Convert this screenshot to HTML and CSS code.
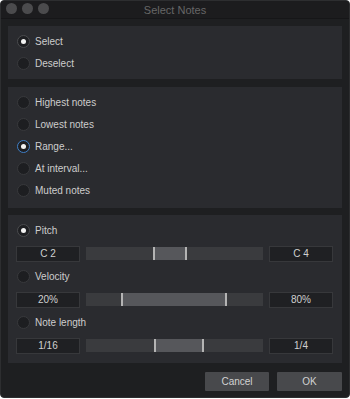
FILE: index.html
```html
<!DOCTYPE html>
<html lang="en">
<head>
<meta charset="utf-8">
<title>Select Notes</title>
<link rel="stylesheet" href="styles.css">
</head>
<body>
<div class="window">
	<div class="titlebar">
		<div class="lights"><span></span><span></span><span></span></div>
		<div class="title">Select Notes</div>
	</div>
	<div class="content">
		<div class="panel p1">
			<label class="radio on"><i></i>Select</label>
			<label class="radio"><i></i>Deselect</label>
		</div>
		<div class="panel p2">
			<label class="radio"><i></i>Highest notes</label>
			<label class="radio"><i></i>Lowest notes</label>
			<label class="radio on focus"><i></i>Range...</label>
			<label class="radio"><i></i>At interval...</label>
			<label class="radio"><i></i>Muted notes</label>
		</div>
		<div class="panel p3">
			<div class="group">
				<label class="radio on"><i></i>Pitch</label>
				<div class="field-row">
					<div class="box">C 2</div>
					<div class="track"><div class="fill" style="left:37.7%; width:19.2%"></div></div>
					<div class="box">C 4</div>
				</div>
			</div>
			<div class="group">
				<label class="radio"><i></i>Velocity</label>
				<div class="field-row">
					<div class="box">20%</div>
					<div class="track"><div class="fill" style="left:19.6%; width:60.2%"></div></div>
					<div class="box">80%</div>
				</div>
			</div>
			<div class="group">
				<label class="radio"><i></i>Note length</label>
				<div class="field-row">
					<div class="box">1/16</div>
					<div class="track"><div class="fill" style="left:38.6%; width:27.8%"></div></div>
					<div class="box">1/4</div>
				</div>
			</div>
		</div>
		<div class="buttons">
			<button class="btn">Cancel</button>
			<button class="btn ok">OK</button>
		</div>
	</div>
</div>
</body>
</html>
```

FILE: styles.css
```css
* {margin:0; padding:0; box-sizing:border-box;}
body {background:#fff; font-family:"Liberation Sans", Arial, sans-serif; font-size:10px; color:#cdcdcd;}

.window {width:350px; height:398px; background:#1e1f21; border:1px solid #2d2e30; border-radius:4px; overflow:hidden; display:flex; flex-direction:column;}

/* title bar */
.titlebar {height:18px; flex:none; position:relative; background:#1c1c1e; border-bottom:1px solid #161618; display:flex; align-items:center; justify-content:center;}
.lights {position:absolute; left:5px; top:2px; display:flex; gap:5px;}
.lights span {width:11px; height:11px; border-radius:50%; background:#4b4b4d;}
.title {font-size:11px; color:#676767;}

.content {padding:7px 7px 0 7px; display:flex; flex-direction:column;}

.panel {background:#2a2b2f; display:flex; flex-direction:column;}
.p1 {padding:4px 0 5px 9px;}
.p2 {margin-top:8px; padding:4px 0 6px 9px;}
.p2 .radio {height:22.2px;}
.p3 {margin-top:7px; padding:5px 9px 9px 8px;}
.p3 .radio {padding-left:1px;}

/* radio buttons */
.radio {height:22px; display:flex; align-items:center; gap:5px;}
.radio i {flex:none; width:13px; height:13px; border-radius:50%; background:#1d1e21; border:1px solid #38393c; display:flex; align-items:center; justify-content:center;}
.radio.on i {border-color:#4a4b4e; background:#1e1f22;}
.radio.on i:after {content:""; width:5px; height:5px; border-radius:50%; background:#f2f2f2;}
.radio.focus i {border:1.5px solid #3f7fc7;}

/* range rows */
.group + .group {margin-top:4px;}
.field-row {margin-top:4px; height:16px; display:flex; align-items:center; gap:6px;}
.box {width:64px; height:16px; flex:none; background:#1f2023; border:1px solid #37383b; text-align:center; line-height:14px; color:#d0d0d0;}
.track {flex:1; height:13px; background:#3a3b3e; position:relative;}
.fill {position:absolute; top:0; bottom:0; background:#56575b; border-left:2px solid #b4b4b4; border-right:2px solid #b4b4b4;}

/* buttons */
.buttons {margin-top:9px; display:flex; justify-content:flex-end; gap:8px;}
.btn {height:19px; width:64px; border:none; border-radius:1px; background:#48494c; color:#d2d2d2; font-family:inherit; font-size:10px;}
.btn.ok {width:65px;}
```
